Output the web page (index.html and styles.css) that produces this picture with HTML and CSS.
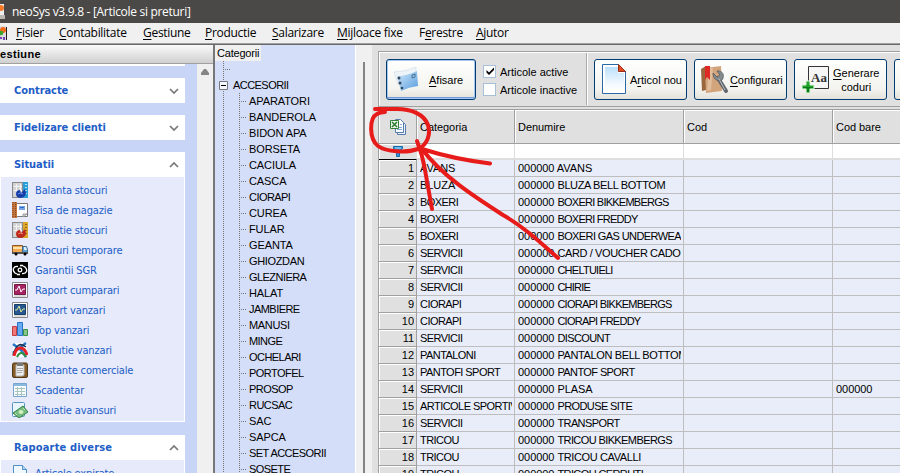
FILE: index.html
```
<!DOCTYPE html>
<html lang="ro">
<head>
<meta charset="utf-8">
<title>neoSys v3.9.8</title>
<link rel="stylesheet" href="styles.css">
</head>
<body>
<div class="window">
<header class="titlebar"><svg class="app-icon" width="5" height="17" viewBox="0 0 5 17"><path fill="#eee" d="M0 1h4v14H0z"/><circle cx="1" cy="5" r="3" fill="#f77b28"/><path fill="#bcb6b0" d="M0 12h5v4H0z"/><path fill="#eee" d="M1 10h2v2H1z"/></svg><span class="title">neoSys v3.9.8 - [Articole si preturi]</span></header>
<nav class="menu"><svg class="menu-icon" width="7" height="16" viewBox="0 0 7 16"><path fill="#ddd" d="M0 1h6v14H0z"/><path d="M6.5 2v13" stroke="#222"/><circle cx="3" cy="5" r="3" fill="#f26a1b"/><circle cx="1" cy="8" r="2.3" fill="#35a52b"/><path fill="#7443b8" d="M0 12h2v2H0zM3 12h2v3H3z"/></svg>
<span class="m1"><u>F</u>isier</span><span class="m2"><u>C</u>ontabilitate</span><span class="m3"><u>G</u>estiune</span><span class="m4"><u>P</u>roductie</span><span class="m5"><u>S</u>alarizare</span><span class="m6"><u>M</u>ijloace fixe</span><span class="m7">F<u>e</u>restre</span><span class="m8"><u>A</u>jutor</span></nav>
<main class="workspace">
<aside class="sidebar">
<h1 class="side-title">estiune</h1>
<div class="side-body">
<div class="groups">
<div class="strip"></div>
<h2 class="group-head">Contracte<svg width="10" height="6" viewBox="0 0 10 6"><path d="M1 1l4 4 4-4"/></svg></h2>
<h2 class="group-head">Fidelizare clienti<svg width="10" height="6" viewBox="0 0 10 6"><path d="M1 1l4 4 4-4"/></svg></h2>
<section class="group">
<h2 class="group-head">Situatii<svg width="10" height="6" viewBox="0 0 10 6"><path d="M1 5l4-4 4 4"/></svg></h2>
<ul class="links">
<li><svg viewBox="0 0 16 16"><path fill="#d4d4d4" stroke="#333" stroke-dasharray="1 1" d="M.5.5h10v15H.5z"/><path stroke="#f4f4f4" fill="none" d="M2 4.500h8M2 8.500h8M4.500 2v12M8.500 2v12"/><path fill="#2a9fd6" d="M11 0h5v16h-5z"/><path stroke="#a9e3f7" d="M13 2.500h2M13 5.500h2M13 8.500h2M13 11.500h2"/><path fill="#173da8" d="M4 12q0-4 4-4l1 3 4-4q3 8-4 9-5 0-5-4z"/><path d="M6 12q2-2 5 0" stroke="#6b93ec" fill="none"/></svg>Balanta stocuri</li>
<li><svg viewBox="0 0 16 16"><path fill="#fff" stroke="#777" d="M4.500 1.500h11v13h-11z"/><path fill="#c4763e" d="M0 0h5v16H0z"/><path stroke="#7a4427" stroke-dasharray="1 1" d="M1 0v16M3.500 0v16"/><path fill="#76a5e2" d="M7 4h6v4H7z"/><path stroke="#2b6bcc" d="M8 5.500h4"/><path fill="#ddd" stroke="#999" d="M11 15v-3h4z"/></svg>Fisa de magazie</li>
<li><svg viewBox="0 0 16 16"><path fill="#d4d4d4" stroke="#333" stroke-dasharray="1 1" d="M.5.5h10v15H.5z"/><path stroke="#f4f4f4" fill="none" d="M2 4.500h8M2 8.500h8M4.500 2v12M8.500 2v12"/><path fill="#dda72d" d="M11 0h5v16h-5z"/><path stroke="#8d651b" d="M13 2.500h2M13 5.500h2M13 8.500h2M13 11.500h2"/><path fill="#bc281b" d="M4 12q0-4 4-4l1 3 4-4q3 8-4 9-5 0-5-4z"/><path d="M6 12q2-2 5 0" stroke="#ef8c75" fill="none"/></svg>Situatie stocuri</li>
<li><svg viewBox="0 0 16 16"><path fill="#f3a951" stroke="#8e572a" d="M.5 3.500h10v7H.5z"/><path stroke="#ffe1ab" stroke-width="2" d="M1 6h9"/><path fill="#5b9fd3" stroke="#426585" d="M10.500 4.500h4l1 3v4h-5z"/><path fill="#d7f1ff" d="M12 5h2l1 3h-3z"/><path fill="#555" d="M0 10h16v2H0z"/><circle cx="4" cy="12" r="1.500"/><circle cx="13" cy="12" r="1.500"/></svg>Stocuri temporare</li>
<li><svg viewBox="0 0 16 16"><path d="M0 0h16v16H0z"/><g fill="none" stroke="#fff" stroke-width="1.300"><path d="M6 4.500C1 4 0 8 3 11l2 1M10 11.500c5 .5 6-3.500 3-6.500l-2-1"/><circle cx="8" cy="8" r="1.800"/><path d="M5 12.500h3M8 3.500h3"/></g></svg>Garantii SGR</li>
<li><svg viewBox="0 0 16 16"><path fill="#fff" stroke="#888" d="M.5.5h15v15H.5z"/><path fill="#a82362" stroke="#751947" d="M2.500 2.500h11v10h-11z"/><path d="M3 8h2l2-4 2 6 2-3h2" fill="none" stroke="#fff"/><path stroke="#bbb" d="M2 14h12"/></svg>Raport cumparari</li>
<li><svg viewBox="0 0 16 16"><path fill="#fff" stroke="#888" d="M.5.5h15v15H.5z"/><path fill="#28588f" stroke="#173e69" d="M2.500 2.500h11v10h-11z"/><path d="M3 8h2l2-4 2 6 2-3h2" fill="none" stroke="#d9e997"/><path stroke="#bbb" d="M2 14h12"/></svg>Raport vanzari</li>
<li><svg viewBox="0 0 16 16"><path fill="#f17777" stroke="#c33d45" d="M.5 4.500h4v9h-4z"/><path fill="#65a9f2" stroke="#2474c6" d="M5.500.5h5v13h-5z"/><path fill="#86c686" stroke="#38924b" d="M11.500 7.500h4v6h-4z"/></svg>Top vanzari</li>
<li><svg viewBox="0 0 16 16"><path fill="#fff" d="M1 1h14v14H1z"/><path d="M1 2l8 6 5 7M1 11L14 1" fill="none" stroke="#2676cc" stroke-width="2.500"/><path d="M1 13C4 3 8 0 14 5" fill="none" stroke="#1d3756" stroke-width="1.500"/><path d="M2 14C4 4 12 3 15 13" fill="none" stroke="#e42326" stroke-width="3"/><path d="M5 15q4-8 9 0" fill="none" stroke="#2d9343" stroke-width="2"/></svg>Evolutie vanzari</li>
<li><svg viewBox="0 0 16 16"><rect x=".5" y="1" width="15" height="14.500" rx="1.500" fill="#865d29" stroke="#513817"/><path fill="#eee" stroke="#bbb" d="M4 3h8v10l-2 1H4z"/><path fill="#777" d="M5 1h6v3H5z"/><path stroke="#aaa" d="M5 6.500h6M5 8.500h6M5 10.500h5"/></svg>Restante comerciale</li>
<li><svg viewBox="0 0 16 16"><path fill="#f8fcff" stroke="#76a6ce" d="M1.500 1.500h13v13h-13z"/><path fill="#87b9dc" d="M2 2h12v2H2z"/><path stroke="#a8c5bd" fill="none" d="M3 6.500h10M3 9.500h10M3 12.500h10M5.500 5v9M9.500 5v9"/></svg>Scadentar</li>
<li><svg viewBox="0 0 16 16"><rect x=".5" y=".5" width="12" height="14" rx="1" fill="#e8f5ff" stroke="#5793bb"/><path fill="#73bb7e" stroke="#378346" d="M1 11L11 4l5 6-9 6z"/><ellipse cx="9" cy="10" rx="2.500" ry="2" fill="#d5edbd"/><path stroke="#c4e7b1" d="M3 11l2 2M11 6l2 2"/></svg>Situatie avansuri</li>
</ul></section>
<section class="group"><h2 class="group-head wide">Rapoarte diverse<svg width="10" height="6" viewBox="0 0 10 6"><path d="M1 5l4-4 4 4"/></svg></h2>
<ul class="links"><li><svg viewBox="0 0 16 16"><path fill="#eff8ff" stroke="#4e91c8" d="M1.500.5h9l4 4v11h-13z"/><path fill="#b8d8f5" stroke="#4e91c8" d="M10.500.5v4h4"/></svg>Articole expirate</li></ul></section>
</div>
<div class="scroll"><svg width="8" height="6" viewBox="0 0 8 6"><path fill="#858585" d="M3 0h2l3 4v2H0V4z"/></svg></div>
</div>
</aside>
<section class="tree">
<div class="tree-label">Categorii</div>
<ul class="nodes"><li class="empty"></li><li class="parent"><svg class="box" width="9" height="9" viewBox="0 0 9 9"><path fill="#f4f6fd" stroke="#777" d="M.5.5h8v8h-8z"/><path stroke="#000" d="M2 4.500h5"/></svg><span class="n6">ACCESORII</span></li></ul>
<ul class="nodes children"><li>APARATORI</li><li>BANDEROLA</li><li>BIDON APA</li><li>BORSETA</li><li>CACIULA</li><li>CASCA</li><li class="n6">CIORAPI</li><li>CUREA</li><li>FULAR</li><li>GEANTA</li><li class="n3">GHIOZDAN</li><li class="n6">GLEZNIERA</li><li>HALAT</li><li class="n6">JAMBIERE</li><li class="n3">MANUSI</li><li class="n6">MINGE</li><li class="n6">OCHELARI</li><li class="n6">PORTOFEL</li><li class="n6">PROSOP</li><li class="n6">RUCSAC</li><li>SAC</li><li>SAPCA</li><li class="n6">SET ACCESORII</li><li class="n6">SOSETE</li></ul>
</section>
<div class="splitter"></div>
<section class="content">
<div class="toolbar">
<button class="btn primary"><svg width="27" height="26" viewBox="0 0 27 26"><defs><linearGradient id="card" x2="1" y2="1"><stop stop-color="#d2e9fa"/><stop offset="1" stop-color="#589ddd"/></linearGradient></defs><path fill="#eef4f8" stroke="#c3d4e1" stroke-width=".5" d="M1 5Q12 5 23 0v8L5 17z"/><path fill="url(#card)" d="M4 9q10 0 20-5l1 15q-9 1-17 5z"/><g fill="#34495d"><circle cx="6" cy="11" r="1.500"/><circle cx="7" cy="16" r="1.500"/><circle cx="9" cy="21" r="1.300"/></g><path fill="none" stroke="#457398" d="M19 8l3-1v3l-3 1z"/></svg><span><u>A</u>fisare</span></button>
<div class="checks"><label><i><svg width="10" height="9" viewBox="0 0 10 9"><path d="M1.500 3v2.500L4 8l5-5V.5L4 5.500z"/></svg></i>Articole active</label><label><i></i>Articole inactive</label></div>
<div class="separator"></div>
<button class="btn"><svg width="25" height="31" viewBox="0 0 25 31"><defs><linearGradient id="paper" x2="0" y2="1"><stop stop-color="#bde0fc"/><stop offset=".7" stop-color="#f2f9ff"/><stop offset="1" stop-color="#fff"/></linearGradient></defs><path fill="#fff" stroke="#2a68a8" d="M.5.5h16l7 7v22H.5z"/><path fill="url(#paper)" d="M3 3h13v6h6v18H3z"/><path fill="#e44b20" stroke="#96301b" d="M16.500.5v7h7z"/></svg><span>A<u>r</u>ticol nou</span></button>
<button class="btn config"><svg width="28" height="29" viewBox="0 0 28 29"><path fill="#9a663d" d="M0 4l5-3v24l-4 1z"/><path fill="#d2a47c" d="M4 3l16-2 1 25-16 2z"/><path fill="#e2bd9b" d="M8 3h4l-2 22-4 1z"/><path fill="#df2924" d="M4 1h5v14l-3-3-2 3z"/><path fill="none" stroke="#60666b" stroke-width="4" stroke-linecap="round" d="M17 13l8 13"/><path fill="#858a8e" stroke="#4d5357" stroke-width=".7" d="M12 8l4 4 3-2-3-4c6-1 8 5 5 9-5 2-9-1-9-7z"/><path stroke="#bcc1c4" d="M18 14l6 11"/></svg><span><u>C</u>onfigurari</span></button>
<button class="btn generate"><svg width="27" height="29" viewBox="0 0 27 29"><path fill="#f6f6f6" stroke="#333" d="M6.500 1.500h20v22h-20z"/><text x="9" y="17">Aa</text><path fill="#20a32a" stroke="#e1f2da" d="M4 16h4v4h4v4H8v4H4v-4H0v-4h4z"/><path fill="#0b7c18" d="M5 22h2v5H5zM1 22h10v1H1z"/></svg><span><u>G</u>enerare<br>coduri</span></button>
<div class="btn next"></div>
</div>
<div class="grid">
<div class="row header"><div><svg width="17" height="16" viewBox="0 0 17 16"><path fill="#e9f1fd" stroke="#567cad" d="M7.500 2.500h5l3 3v10h-8z"/><path fill="#fff" stroke="#567cad" d="M5.500.5h5l3 3v10h-8z"/><path stroke="#83a9d9" d="M7 8.500h5M7 10.500h5M10 5.500h2"/><path fill="#ecf7e7" stroke="#34813b" d="M.5 1.500h8v8h-8z"/><path stroke="#2b7c31" stroke-width="1.500" d="M2 3l5 5M7 3L2 8"/></svg></div><div>Categoria</div><div>Denumire</div><div>Cod</div><div>Cod bare</div></div>
<div class="row filter"><div><svg width="10" height="11" viewBox="0 0 10 11"><path fill="#2998df" stroke="#1a69a9" d="M.5.5h9v2L6.500 5v5.500h-3V5L.5 2.500z"/><path stroke="#b2e4ff" d="M2 2h6"/></svg></div><div></div><div></div><div></div><div></div></div>
<div class="row"><div>1</div><div>AVANS</div><div>000000 AVANS</div><div></div><div></div></div>
<div class="row"><div>2</div><div>BLUZA</div><div>000000 <span class="n3">BLUZA BELL BOTTOM</span></div><div></div><div></div></div>
<div class="row"><div>3</div><div class="n6">BOXERI</div><div>000000 <span class="n7">BOXERI BIKKEMBERGS</span></div><div></div><div></div></div>
<div class="row"><div>4</div><div class="n6">BOXERI</div><div>000000 <span class="n7">BOXERI FREDDY</span></div><div></div><div></div></div>
<div class="row"><div>5</div><div class="n6">BOXERI</div><div>000000 <span class="n6">BOXERI GAS UNDERWEAR</span></div><div></div><div></div></div>
<div class="row"><div>6</div><div class="n6">SERVICII</div><div>000000 <span class="n3">CARD / VOUCHER CADOU</span></div><div></div><div></div></div>
<div class="row"><div>7</div><div class="n6">SERVICII</div><div>000000 <span class="n7">CHELTUIELI</span></div><div></div><div></div></div>
<div class="row"><div>8</div><div class="n6">SERVICII</div><div>000000 <span class="n7">CHIRIE</span></div><div></div><div></div></div>
<div class="row"><div>9</div><div class="n6">CIORAPI</div><div>000000 <span class="n7">CIORAPI BIKKEMBERGS</span></div><div></div><div></div></div>
<div class="row"><div>10</div><div class="n6">CIORAPI</div><div>000000 <span class="n7">CIORAPI FREDDY</span></div><div></div><div></div></div>
<div class="row"><div>11</div><div class="n6">SERVICII</div><div>000000 <span class="n6">DISCOUNT</span></div><div></div><div></div></div>
<div class="row"><div>12</div><div class="n6">PANTALONI</div><div>000000 <span class="n3">PANTALON BELL BOTTOM</span></div><div></div><div></div></div>
<div class="row"><div>13</div><div class="n6">PANTOFI SPORT</div><div>000000 <span class="n6">PANTOF SPORT</span></div><div></div><div></div></div>
<div class="row"><div>14</div><div class="n6">SERVICII</div><div>000000 PLASA</div><div></div><div>000000</div></div>
<div class="row"><div>15</div><div class="n6">ARTICOLE SPORTIVE</div><div>000000 <span class="n6">PRODUSE SITE</span></div><div></div><div></div></div>
<div class="row"><div>16</div><div class="n6">SERVICII</div><div>000000 <span class="n6">TRANSPORT</span></div><div></div><div></div></div>
<div class="row"><div>17</div><div class="n6">TRICOU</div><div>000000 <span class="n6">TRICOU BIKKEMBERGS</span></div><div></div><div></div></div>
<div class="row"><div>18</div><div class="n6">TRICOU</div><div>000000 <span class="n3">TRICOU CAVALLI</span></div><div></div><div></div></div>
<div class="row"><div>19</div><div class="n6">TRICOU</div><div>000000 <span class="n6">TRICOU CERRUTI</span></div><div></div><div></div></div>
</div>
</section>
</main>
<svg class="annotation" width="900" height="473" viewBox="0 0 900 473"><path d="M375 109H397C411 109 424 114 428 125C431 135 427 145 418 149C407 153 386 152 378 146C369 139 369 118 377 114Q380 112 385 112"/><path d="M417 141C421 151 423 158 425 170L432 209M422 149C441 155 462 160 490 163.500M422 149C442 176 475 197 503 215C524 227 540 242 558 258"/></svg>
</div>
</body>
</html>
```
FILE: styles.css
```
* { box-sizing: border-box; }
body { margin: 0; overflow: hidden; }
.window { position: relative; width: 900px; height: 473px; overflow: hidden; background: #f0f0f0; font: 11px "Liberation Sans", sans-serif; color: #000; }
.titlebar { height: 23px; background: #4b4947; color: #fff; display: flex; align-items: center; font: 12px "Open Sans", sans-serif; }
.title { margin-left: 7px; letter-spacing: -.3px; }
.menu { height: 20px; display: flex; align-items: center; font: 12px/20px "Open Sans", sans-serif; letter-spacing: -.3px; }
.menu-icon { margin-right: 9px; }
.menu u, .btn u { text-underline-offset: 2px; text-decoration-thickness: 1px; }
.menu span { white-space: nowrap; }
.m1 { width: 43px; } .m2 { width: 84px; } .m3 { width: 62px; } .m4 { width: 67px; }
.m5 { width: 65px; } .m6 { width: 82px; } .m7 { width: 57px; }
.workspace { height: 430px; display: flex; border-top: 1px solid #a0a0a0; box-shadow: inset 0 1px #696969; padding-top: 1px; }
.sidebar { width: 213px; display: flex; flex-direction: column; }
.side-title { margin: 0; height: 19px; border-bottom: 1px solid #a0a0a0; background: linear-gradient(#fafafa, #d0d0d0); font: bold 11px/18px "Liberation Sans", sans-serif; letter-spacing: .35px; }
.side-body { display: flex; height: 409px; overflow: hidden; }
.groups { width: 197px; padding-right: 12px; background: #c8d5f7; display: flex; flex-direction: column; gap: 12px; }
.strip { height: 2px; flex: none; background: #fff; }
.group-head { flex: none; margin: 0; height: 25px; padding: 0 6px 0 14px; display: flex; align-items: center; justify-content: space-between; background: #fff; color: #215dc6; font: bold 11px "DejaVu Sans Condensed", "DejaVu Sans", sans-serif; font-stretch: condensed; letter-spacing: -.05px; }
.group-head.wide { letter-spacing: .15px; }
.group-head svg { fill: none; stroke: #777; stroke-width: 1.7; }
.group { flex: none; margin-bottom: 1px; }
.links { list-style: none; margin: 0; padding: 3px 0 1px 11px; border: solid #fff; border-width: 0 1px 1px; background: #e6eafa; color: #215dc6; font: 11px "DejaVu Sans Condensed", "DejaVu Sans", sans-serif; font-stretch: condensed; letter-spacing: -.15px; }
.links li { display: flex; align-items: center; height: 20px; gap: 7px; white-space: nowrap; }
.links svg { width: 16px; height: 16px; flex: none; }
.scroll { width: 16px; padding-top: 4px; text-align: center; line-height: 6px; }
.tree { width: 143px; border-left: 2px solid #777; border-right: 1px solid #fff; background: #d5def8; }
.tree-label { width: 46px; height: 16px; padding-left: 2px; background: #f0f0f0; line-height: 16px; letter-spacing: -.2px; }
.nodes { margin: 0 0 0 8px; padding: 0; list-style: none; background: repeating-linear-gradient(#777 0 1px, transparent 1px 2px) left / 1px 100% no-repeat; }
.nodes li { height: 16px; line-height: 16px; white-space: nowrap; background: repeating-linear-gradient(90deg, #777 0 1px, transparent 1px 2px) left center / 7px 1px no-repeat; }
.nodes .parent { display: flex; align-items: center; gap: 5px; background: none; margin-left: -4px; }
.children { height: 400px; background: repeating-linear-gradient(#777 0 1px, transparent 1px 2px) left / 1px 100% no-repeat, repeating-linear-gradient(#777 0 1px, transparent 1px 2px) 16px 0 / 1px 100% no-repeat; padding-left: 16px; }
.children li { padding-left: 10px; letter-spacing: -.1px; }
.splitter { width: 16px; margin-top: 17px; border-right: 7px solid #f0f0f0; border-left: 7px solid #f0f0f0; background: #858585; }
.content { width: 528px; padding: 6px 0 0 6px; background: #e0e0e0; }
.toolbar { height: 56px; display: flex; align-items: flex-start; padding: 7px 0 0 7px; border: solid #a0a0a0; border-width: 1px 0 1px 1px; box-shadow: inset 1px 1px #fff; overflow: hidden; }
.btn { flex: none; width: 93px; height: 41px; margin-right: 7px; padding: 0 0 0 7px; display: flex; align-items: center; gap: 3px; border: 1px solid #003c74; border-radius: 3px; background: linear-gradient(#fff, #f3f3ef 75%, #e4e1da); font: 11px/14px "Liberation Sans", sans-serif; color: #000; white-space: nowrap; }
.btn svg { flex: none; }
.btn.primary { width: 90px; margin-right: 7px; padding-left: 6px; gap: 9px; box-shadow: inset 0 0 0 1px #a6c5ef, inset 0 -2px #7198d9; }
.checks { flex: none; width: 103px; padding-top: 6px; display: flex; flex-direction: column; gap: 5px; }
.checks label { height: 13px; display: flex; align-items: center; gap: 4px; white-space: nowrap; }
.checks i { width: 13px; height: 13px; background: #fff; border: 1px solid #a7bfd8; display: flex; align-items: center; justify-content: center; }
.separator { flex: none; width: 2px; height: 52px; margin: -6px 6px 0 0; border-left: 1px solid #aaa; background: #fff; }
.btn.config { padding-left: 6px; gap: 1px; letter-spacing: -.1px; }
.btn.generate { padding-left: 7px; gap: 4px; text-align: center; }
.generate text { font: bold 13px "Liberation Serif", serif; fill: #333; }
.grid { margin-top: 2px; border: solid #a0a0a0; border-width: 1px 0 0 1px; height: 364px; overflow: hidden; }
.row { display: grid; grid-template: 100% / 38px 98px 169px 149px 68px; height: 17px; }
.row > div { border: solid #bebebe; border-width: 0 1px 1px 0; background: #e8edf9; padding-left: 3px; line-height: 16px; white-space: nowrap; overflow: clip; overflow-clip-margin: content-box; padding-right: 2px; letter-spacing: -.05px; }
.row > div:first-child { background: #e0e0e0; box-shadow: inset 1px 1px #fff; text-align: right; border-color: #a0a0a0; }
.row.header { height: 34px; }
.row.header > div { background: #e0e0e0; border-color: #a0a0a0; box-shadow: inset 1px 1px #fff; line-height: 34px; }
.row.header > div:first-child { display: flex; align-items: center; justify-content: center; }
.row.filter { height: 16px; }
.row.filter > div { background: #fff; border-color: #dedede; border-bottom-width: 2px; }
.row.filter > div:first-child { background: #e0e0e0; border-bottom: 1px solid #000; display: flex; justify-content: center; align-items: center; }
.children .n3, .row .n3 { letter-spacing: -.35px; }
.n6, .children .n6, .row .n6 { letter-spacing: -.55px; }
.row span.n6 { letter-spacing: -.6px; }
.row .n7 { letter-spacing: -.75px; }
.row span.n3 { letter-spacing: -.38px; }
.annotation { position: absolute; inset: 0; pointer-events: none; fill: none; stroke: #e81b1b; stroke-width: 4; stroke-linecap: round; stroke-linejoin: round; }
```
